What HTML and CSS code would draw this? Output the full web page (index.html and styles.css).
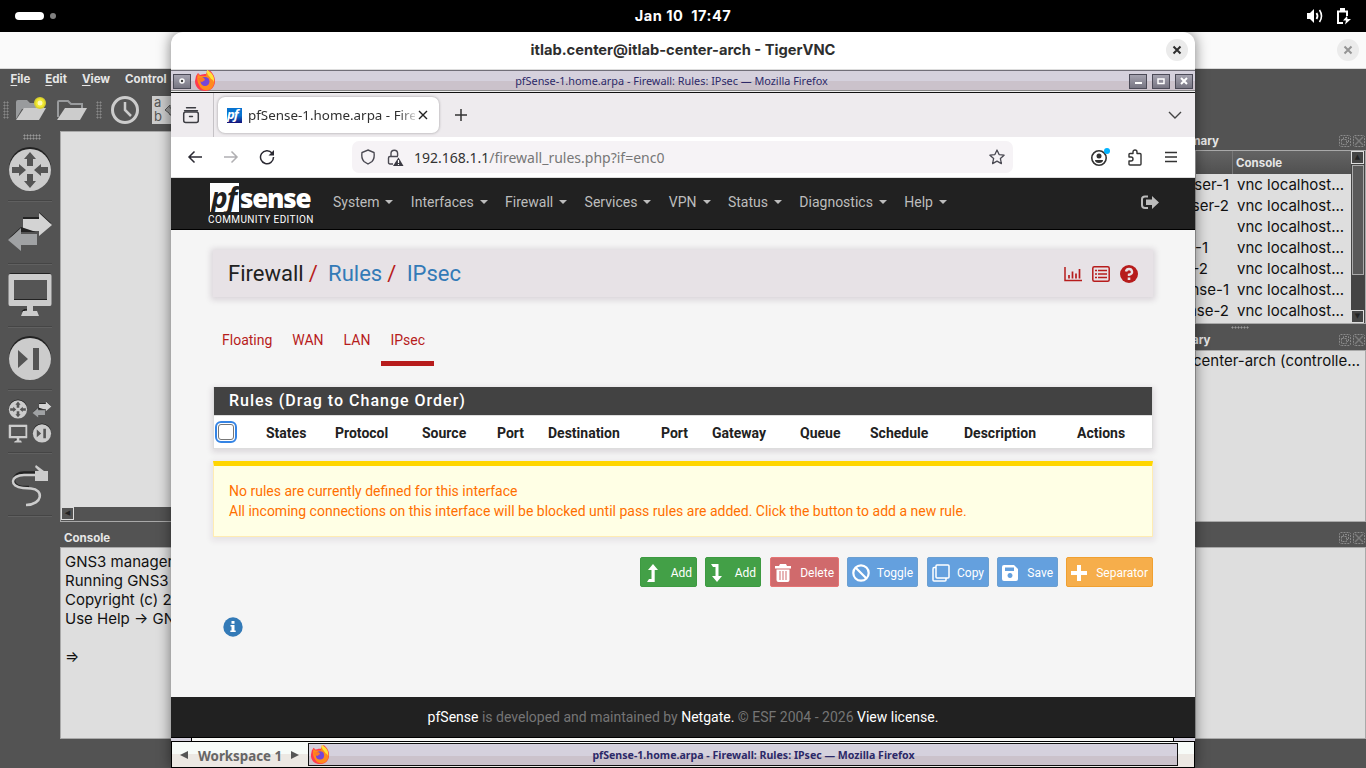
FILE: index.html
```
<!DOCTYPE html>
<html lang="en">
<head>
    <meta charset="UTF-8">
    <meta name="viewport" content="width=device-width, initial-scale=1.0">
    <title>pfSense-1.home.arpa - Firewall: Rules: IPsec</title>
    <link rel="stylesheet" href="styles.css">
</head>
<body>

    <!-- shared icons -->
    <svg class="defs" width="0" height="0">
        <symbol id="router" viewBox="0 0 44 46">
            <circle cx="22" cy="22" r="21" fill="#222"/>
            <circle cx="22" cy="24" r="21" fill="#ccc"/>
            <path fill="#555" d="M22 6l6 7h-3v7h-6v-7h-3zM22 42l6-7h-3v-7h-6v7h-3zM18 24l-7-6v3H4v6h7v3zM26 24l7-6v3h7v6h-7v3z"/>
        </symbol>
        <symbol id="switch" viewBox="0 0 44 40">
            <path fill="#222" d="M15 5h16V0l12 11-12 9v-3H15z"/>
            <path fill="#d3d3d3" d="M15 7h16V1l13 12-13 11v-5H15z"/>
            <path fill="#222" d="M13 15L1 26l11-6h16z"/>
            <path fill="#a0a2a4" d="M29 22H13v-6L0 28l13 11v-6h16z"/>
        </symbol>
        <symbol id="monitor" viewBox="0 0 44 44">
            <rect x="1" y="0" width="42" height="31" rx="2" fill="#222"/>
            <rect x="5" y="6" width="34" height="22" fill="#555"/>
            <path fill="#ccc" fill-rule="evenodd" d="M2 1h40q1.500 0 1.500 2v28q0 2-1.500 2H25v5h4l2 5H13l2-5h4v-5H2q-1.500 0-1.500-2V3q0-2 1.500-2zM6 7v20h33V7z"/>
            <path stroke="#222" d="M6 26.500h33M14 38.500l2-2h3"/>
        </symbol>
        <symbol id="skip" viewBox="0 0 44 46">
            <circle cx="22" cy="22" r="21" fill="#222"/>
            <circle cx="22" cy="24" r="21" fill="#ccc"/>
            <path fill="#555" d="M10 15l10 9-10 9zM25 13h6v22h-6z"/>
        </symbol>
        <symbol id="firefox" viewBox="0 0 22 22">
            <path fill="#ff3a4e" d="M2 6l2-3 2 2c3-1 4-1 6-1l3-4c3 2 6 6 6 11 0 6-4 10-10 10S1 17 1 11z"/>
            <path fill="#ff8a1e" d="M4 4l2 2h6l1-6 3 3c5 4 6 10 2 15-3 3-8 3-11 0-3-4-5-9-3-14z"/>
            <path fill="#ffe338" d="M13 0c4 2 8 6 7 12-1-2-2-3-3-3-1-3-5-4-4-9z"/>
            <circle cx="11" cy="11.500" r="4.500" fill="#7646d8"/>
            <path fill="#ff7a20" d="M4 8l6 0 1 2-3 2-3-1z"/>
        </symbol>
        <symbol id="float" viewBox="0 0 12 12">
            <path fill="none" stroke="#8b8b8b" stroke-dasharray="2 1" d="M1.500.5h9l1 1v9l-1 1h-9l-1-1v-9z"/>
            <path fill="none" stroke="#8b8b8b" stroke-dasharray="2 1" d="M2.500 4.500h5v5h-5zM4.500 4V2.500h5v5H8"/>
        </symbol>
        <symbol id="dockclose" viewBox="0 0 12 12">
            <path fill="none" stroke="#8b8b8b" stroke-dasharray="2 1" d="M1.500.5h9l1 1v9l-1 1h-9l-1-1v-9z"/>
            <path stroke="#7b7b7b" stroke-width="1.500" d="M2 2l8 8M10 2l-8 8"/>
        </symbol>
        <symbol id="cross" viewBox="0 0 10 10">
            <path stroke="currentColor" stroke-width="2" d="M1.500 1.500l7 7M8.500 1.500l-7 7"/>
        </symbol>
    </svg>

    <!-- desktop bar -->
    <div class="topbar">
        <div class="activities"><span class="pill"></span><span class="dot"></span></div>
        <div class="clock"><span>Jan 10</span><span>17:47</span></div>
        <div class="tray">
            <svg width="18" height="16" viewBox="0 0 18 16"><path fill="#fff" d="M1 5h3l4-4v14l-4-4H1z"/><path fill="none" stroke="#fff" stroke-width="1.800" d="M10.500 5q2 3 0 6"/><path fill="none" stroke="#fff" stroke-width="1.600" d="M13.500 2q4 6 0 12"/></svg>
            <svg width="15" height="17" viewBox="0 0 15 17"><path fill="none" stroke="#fff" stroke-width="2" d="M7 15H2V3.500h9V8"/><path fill="#fff" d="M4 0h5v3H4zM11 8l-4 4.500h3l-1 4 6-5.500h-3.500z"/></svg>
        </div>
    </div>

    <div class="desktop">

        <!-- GNS3 -->
        <div class="gns3">
            <div class="gns3-header"><span class="round-close"><svg width="10" height="10"><use href="#cross"/></svg></span></div>
            <div class="menubar"><span><u>F</u>ile</span><span><u>E</u>dit</span><span><u>V</u>iew</span><span>Control</span></div>
            <div class="gns3-body">
                <div class="gns3-left">
                    <div class="toolbar">
                        <i class="grip"></i>
                        <svg class="folder" width="32" height="26" viewBox="0 0 32 26"><path fill="#999b9d" d="M1 5q0-2 2-2h9l3 3h10v6H7L1 22z"/><path fill="#ccc" d="M1 23L9 11h22l-7 12z"/><circle cx="25" cy="6" r="6" fill="#d8cf30"/><circle cx="25" cy="6" r="4.500" fill="#f1e82e"/><circle cx="25" cy="6" r="2.500" fill="#fffbb0"/></svg>
                        <svg class="folder2" width="32" height="26" viewBox="0 0 32 26"><path fill="none" stroke="#999b9d" stroke-width="2" d="M2 20V5q0-1 1-1h9l3 3h11v5"/><path fill="#ccc" d="M1 23L9 11h22l-7 12z"/></svg>
                        <i class="grip"></i>
                        <svg class="watch" width="30" height="30" viewBox="0 0 30 30"><circle cx="15" cy="15" r="12.500" fill="#555" stroke="#ccc" stroke-width="3"/><path fill="none" stroke="#ccc" stroke-width="2.500" d="M15 7v8l6 6"/></svg>
                        <div class="ab"><span>a</span><span>b</span><svg width="13" height="14" viewBox="0 0 13 14"><path fill="#999" stroke="#555" d="M1 7l5-5v3h7v7H6l-1-2z"/></svg></div>
                    </div>
                    <div class="work">
                        <div class="devices">
                            <i class="grip-h"></i>
                            <div class="device"><svg width="44" height="46"><use href="#router"/></svg></div>
                            <div class="device"><svg width="44" height="40"><use href="#switch"/></svg></div>
                            <div class="device"><svg width="44" height="44"><use href="#monitor"/></svg></div>
                            <div class="device"><svg width="44" height="46"><use href="#skip"/></svg></div>
                            <div class="device all">
                                <svg width="20" height="20"><use href="#router"/></svg>
                                <svg width="20" height="17"><use href="#switch"/></svg>
                                <svg width="20" height="19"><use href="#monitor"/></svg>
                                <svg width="20" height="20"><use href="#skip"/></svg>
                            </div>
                            <div class="device"><svg width="40" height="46" viewBox="0 0 40 46"><path fill="none" stroke="#222" stroke-width="2.500" d="M25 11.500H14C2 11.500 0 24 12 26h7"/><path fill="none" stroke="#ccc" stroke-width="2.500" d="M26 14H14C0 14-1 26 13 27l8 .500c13 1 12 16-5 16.500"/><path fill="#ccc" d="M25 10h4l-4-4 1-2 8 6h4v10H25z"/></svg></div>
                        </div>
                        <div class="center">
                            <div class="canvas"><div class="hscroll"><b>◀</b></div></div>
                            <div class="dock-title">Console</div>
                            <div class="console">GNS3 manager<br>Running GNS3 <br>Copyright (c) 2<br>Use Help → GN<br><br>⇒</div>
                        </div>
                    </div>
                </div>
                <div class="gns3-right">
                    <div class="dock-title topo"><span>mary</span><svg width="12" height="12"><use href="#float"/></svg><svg width="12" height="12"><use href="#dockclose"/></svg></div>
                    <div class="topology">
                        <div class="nodes">
                            <div class="nodes-head"><span></span><span>Console</span></div>
                            <div class="node"><span>ser-1</span><span>vnc localhost...</span></div>
                            <div class="node"><span>ser-2</span><span>vnc localhost...</span></div>
                            <div class="node"><span></span><span>vnc localhost...</span></div>
                            <div class="node short"><span>-1</span><span>vnc localhost...</span></div>
                            <div class="node short"><span>-2</span><span>vnc localhost...</span></div>
                            <div class="node"><span>nse-1</span><span>vnc localhost...</span></div>
                            <div class="node"><span>nse-2</span><span>vnc localhost...</span></div>
                        </div>
                        <div class="vscroll"><b>▲</b><i></i><b>▼</b></div>
                    </div>
                    <div class="dock-title servers"><i class="grip-h"></i><span>ary</span><svg width="12" height="12"><use href="#float"/></svg><svg width="12" height="12"><use href="#dockclose"/></svg></div>
                    <div class="server-list">center-arch (controlle...</div>
                    <div class="dock-title"><span></span><svg width="12" height="12"><use href="#float"/></svg><svg width="12" height="12"><use href="#dockclose"/></svg></div>
                    <div class="console-right"></div>
                </div>
            </div>
        </div>

        <!-- TigerVNC -->
        <div class="vnc">
            <div class="vnc-header">itlab.center@itlab-center-arch - TigerVNC<span class="round-close"><svg width="10" height="10"><use href="#cross"/></svg></span></div>

            <div class="wm-title">
                <span class="wm-btn"><svg width="6" height="6" viewBox="0 0 6 6"><circle cx="3" cy="3" r="2" fill="#444" stroke="#fff" stroke-width="1.500"/></svg></span>
                <svg class="ff" width="22" height="22"><use href="#firefox"/></svg>
                <span class="wm-text">pfSense-1.home.arpa - Firewall: Rules: IPsec — Mozilla Firefox</span>
                <span class="wm-btn"><svg width="8" height="8" viewBox="0 0 8 8"><path fill="#fff" d="M1 5h7v2H1z"/></svg></span>
                <span class="wm-btn"><svg width="8" height="8" viewBox="0 0 8 8"><path fill="none" stroke="#fff" stroke-width="1.500" d="M1 2h6v4.500H1z"/></svg></span>
                <span class="wm-btn"><svg width="8" height="8" viewBox="0 0 8 8"><path stroke="#fff" stroke-width="2" d="M1 1l6 6M7 1L1 7"/></svg></span>
            </div>

            <div class="tabstrip">
                <div class="fxview"><svg width="18" height="18" viewBox="0 0 18 18"><path fill="none" stroke="#3c3c42" stroke-width="1.400" stroke-linecap="round" d="M4.500 1.700h9M2.500 4.700h13M7.500 10.500h3"/><rect x="1.700" y="6" width="14.600" height="10.500" rx="2" fill="none" stroke="#3c3c42" stroke-width="1.500"/></svg></div>
                <div class="tab">
                    <span class="favicon">pf</span>
                    <span class="tab-text">pfSense-1.home.arpa - Fire</span>
                    <svg width="10" height="10" viewBox="0 0 10 10"><path stroke="#222" stroke-width="1.400" d="M1 1l8 8M9 1L1 9"/></svg>
                </div>
                <svg class="newtab" width="14" height="14" viewBox="0 0 14 14"><path stroke="#333" stroke-width="1.500" d="M7 1v12M1 7h12"/></svg>
                <svg class="alltabs" width="14" height="8" viewBox="0 0 14 8"><path fill="none" stroke="#444" stroke-width="1.400" d="M1 1l6 6 6-6"/></svg>
            </div>

            <div class="navtools">
                <svg width="16" height="14" viewBox="0 0 16 14"><path fill="none" stroke="#2b2a33" stroke-width="1.500" d="M15 7H2M7.500 1.500L2 7l5.500 5.500"/></svg>
                <svg width="16" height="14" viewBox="0 0 16 14"><path fill="none" stroke="#b0afb2" stroke-width="1.500" d="M1 7h13M8.500 1.500L14 7l-5.500 5.500"/></svg>
                <svg class="reload" width="16" height="16" viewBox="0 0 16 16"><path fill="none" stroke="#2b2a33" stroke-width="1.500" d="M13 4A6.500 6.500 0 1 0 14.500 8"/><path fill="#2b2a33" d="M15 1v5.500H9.500z"/></svg>
                <div class="urlbar">
                    <svg width="16" height="16" viewBox="0 0 16 16"><path fill="none" stroke="#4b4a53" stroke-width="1.400" d="M8 1l6 2.500q1 6-2 9L8 15l-4-2.500q-3-3-2-9z"/></svg>
                    <svg class="lock" width="17" height="17" viewBox="0 0 17 17"><path fill="none" stroke="#4b4a53" stroke-width="1.400" d="M4 7V4.500a3.300 3.300 0 0 1 6.600 0V7M6 15H3q-1.500 0-1.500-1.500V9Q1.500 7.500 3 7.500h8"/><path fill="#3b3a43" d="M11.500 8.500L16.500 17H6z"/><path stroke="#fff" stroke-width="1.200" d="M11.500 11v3M11.500 15v1"/></svg>
                    <span class="url"><b>192.168.1.1</b>/firewall_rules.php?if=enc0</span>
                    <svg width="16" height="16" viewBox="0 0 16 16"><path fill="none" stroke="#4b4a53" stroke-width="1.300" stroke-linejoin="round" d="M8 1l2.100 4.600 5 .6-3.700 3.400 1 5L8 12.100l-4.400 2.500 1-5L.9 6.200l5-.6z"/></svg>
                </div>
                <svg class="account" width="20" height="20" viewBox="0 0 20 20"><circle cx="9" cy="11" r="7.200" fill="none" stroke="#333" stroke-width="1.600"/><circle cx="9" cy="9" r="2.500" fill="#333"/><path fill="#333" d="M5 13h8q0 3-4 3t-4-3z"/><circle cx="17" cy="4" r="3" fill="#00b3ff"/></svg>
                <svg class="puzzle" width="16" height="17" viewBox="0 0 16 17"><path fill="none" stroke="#333" stroke-width="1.400" stroke-linejoin="round" d="M2 8V5.500q0-1 1-1h3V3a2 2 0 0 1 4 0v1.500h3q1 0 1 1V15q0 1-1 1H3q-1 0-1-1v-3h2a2 2 0 0 0 0-4z"/></svg>
                <svg class="burger" width="12" height="12" viewBox="0 0 12 12"><path stroke="#333" stroke-width="1.300" d="M0 1.500h12M0 6h12M0 10.500h12"/></svg>
            </div>

            <div class="page">
                <div class="navbar">
                    <div class="brand">
                        <div class="logo"><span class="pf">pf</span><span class="sense">sense</span></div>
                        <div class="edition">COMMUNITY EDITION</div>
                    </div>
                    <a>System</a><a>Interfaces</a><a>Firewall</a><a>Services</a><a>VPN</a><a>Status</a><a>Diagnostics</a><a>Help</a>
                    <svg class="logout" width="18" height="15" viewBox="0 0 18 15"><path fill="none" stroke="#bbb" stroke-width="2" d="M7 1.500H4Q1 1.500 1 4v6q0 3 3 3h3"/><path fill="#bbb" d="M5 4.500h6V1l7 6.500-7 6.500v-4H5z"/></svg>
                </div>

                <div class="container">
                    <div class="header">
                        <span>Firewall</span><i>/</i><a>Rules</a><i>/</i><a>IPsec</a>
                        <div class="header-icons">
                            <svg width="18" height="16" viewBox="0 0 18 16"><path fill="none" stroke="#b71c1c" stroke-width="1.500" d="M1 1v13.500h17"/><path stroke="#b71c1c" stroke-width="1.700" d="M5 12.500V9M8.500 12.500v-7M12 12.500V7.500M15.500 12.500V3"/></svg>
                            <svg width="18" height="16" viewBox="0 0 18 16"><rect x=".8" y=".8" width="16.400" height="14.400" rx="1.500" fill="none" stroke="#b71c1c" stroke-width="1.500"/><path stroke="#b71c1c" stroke-width="1.500" d="M3 4.500h2M3 8h2M3 11.500h2M6 4.500h9M6 8h9M6 11.500h9"/></svg>
                            <svg width="18" height="18" viewBox="0 0 18 18"><circle cx="9" cy="9" r="9" fill="#b71c1c"/><path fill="none" stroke="#e7e2e6" stroke-width="2.400" d="M6 6.500Q6.500 4 9 4t3 2.500T9 9.700v1.300"/><path fill="#e7e2e6" d="M7.700 12.500h2.600V15H7.700z"/></svg>
                        </div>
                    </div>

                    <div class="pills"><a>Floating</a><a>WAN</a><a>LAN</a><a class="active">IPsec</a></div>

                    <div class="panel">
                        <div class="panel-heading">Rules (Drag to Change Order)</div>
                        <div class="thead">
                            <span class="checkbox"></span><span>States</span><span>Protocol</span><span>Source</span><span>Port</span><span>Destination</span><span>Port</span><span>Gateway</span><span>Queue</span><span>Schedule</span><span>Description</span><span>Actions</span>
                        </div>
                    </div>

                    <div class="alert">No rules are currently defined for this interface<br>All incoming connections on this interface will be blocked until pass rules are added. Click the button to add a new rule.</div>

                    <div class="actions">
                        <a class="btn green w57"><svg width="16" height="20" viewBox="0 0 16 20"><path fill="#fff" d="M8 1l5 6H9.700v12H2l2-3h2.500V7H3z"/></svg>Add</a>
                        <a class="btn green w56"><svg width="16" height="20" viewBox="0 0 16 20"><path fill="#fff" d="M1 1h7.500v12H12l-5 6-5-6h3.500V4H3z"/></svg>Add</a>
                        <a class="btn red w69"><svg width="16" height="20" viewBox="0 0 16 20"><path fill="#fff" fill-rule="evenodd" d="M0 3h4l1-2h6l1 2h4v2.500H0zM1.500 6.500h13V17q0 2-2 2h-9q-2 0-2-2zM4.500 8v9h1V8zM7.500 8v9h1V8zM10.500 8v9h1V8z"/></svg>Delete</a>
                        <a class="btn blue w71"><svg width="18" height="20" viewBox="0 0 18 20"><circle cx="9" cy="10" r="7.700" fill="none" stroke="#fff" stroke-width="2.200"/><path stroke="#fff" stroke-width="2.200" d="M3.500 4.500l11 11"/></svg>Toggle</a>
                        <a class="btn blue w62"><svg width="18" height="20" viewBox="0 0 18 20"><rect x="4" y="2" width="13" height="13" rx="1" fill="none" stroke="#fff" stroke-width="1.500"/><path fill="none" stroke="#fff" stroke-width="1.500" d="M4 4.500H2Q1 4.500 1 6v11q0 1 1 1h11q1 0 1-1v-2"/></svg>Copy</a>
                        <a class="btn blue w61"><svg width="16" height="20" viewBox="0 0 16 20"><path fill="#fff" fill-rule="evenodd" d="M0 4q0-2 2-2h10l4 4v10q0 2-2 2H2q-2 0-2-2zM3 4.500V8h9V4.500zM8 10a2.500 2.500 0 1 0 .01 0z"/></svg>Save</a>
                        <a class="btn orange w87"><svg width="16" height="20" viewBox="0 0 16 20"><path stroke="#fff" stroke-width="4" d="M8 2v16M0 10h16"/></svg>Separator</a>
                    </div>

                    <svg class="info" width="20" height="20" viewBox="0 0 20 20"><circle cx="10" cy="10" r="9.700" fill="#337ab7"/><path fill="#fff" d="M8.500 4h3v2.800h-3zM7.500 8h4v5.500h1.200V15H7.300v-1.500h1.200v-4h-1z"/></svg>
                </div>

                <div class="footer"><b>pfSense</b> is developed and maintained by <b>Netgate.</b> © ESF 2004 - 2026 <b>View license.</b></div>
            </div>

            <div class="wm-bottom"><i></i><i></i><i></i></div>
            <div class="taskbar">
                <span class="arrow left"></span>
                <span class="workspace">Workspace 1</span>
                <span class="arrow right"></span>
                <div class="task"><svg width="20" height="20"><use href="#firefox"/></svg><span>pfSense-1.home.arpa - Firewall: Rules: IPsec — Mozilla Firefox</span></div>
            </div>
        </div>
    </div>

</body>
</html>
```
FILE: styles.css
```
* {
    box-sizing: border-box;
}

body {
    margin: 0;
    width: 1366px;
    height: 768px;
    overflow: hidden;
    background: #000;
    font-family: Inter, "Noto Sans", sans-serif;
}

svg {
    display: block;
    flex: none;
}

.defs {
    position: absolute;
}

/* desktop bar */
.topbar {
    display: flex;
    justify-content: space-between;
    align-items: center;
    height: 32px;
    padding: 0 15px;
    color: #fff;
}

.activities, .tray {
    display: flex;
    align-items: center;
    width: 200px;
    gap: 6px;
}

.tray {
    justify-content: flex-end;
    gap: 12px;
}

.pill {
    width: 29px;
    height: 8px;
    border-radius: 4px;
    background: #fff;
}

.dot {
    width: 6px;
    height: 6px;
    border-radius: 50%;
    background: #808080;
}

.clock {
    display: flex;
    gap: 8px;
    margin-top: -1px;
    font-size: 14.6px;
    font-weight: 700;
    letter-spacing: 0.5px;
}

.desktop {
    position: relative;
    height: 736px;
    overflow: hidden;
}

/* GNS3 window */
.gns3 {
    height: 736px;
    background: #535353;
    color: #e6e6e6;
}

.gns3-header {
    display: flex;
    justify-content: flex-end;
    align-items: center;
    height: 37px;
    padding-right: 7px;
    background: #fafafa;
    border-bottom: 1px solid #d8d8d8;
    color: #949494;
}

.round-close {
    display: flex;
    align-items: center;
    justify-content: center;
    width: 22px;
    height: 22px;
    border-radius: 50%;
    background: #ebebeb;
}

.menubar {
    display: flex;
    gap: 15px;
    height: 21px;
    padding-left: 10.500px;
    font-size: 11.5px;
    font-weight: 700;
    line-height: 20px;
}

.menubar u {
    text-underline-offset: 2px;
}

.gns3-body {
    display: flex;
    height: 678px;
}

.gns3-left {
    flex: 1;
}

.toolbar {
    display: flex;
    align-items: center;
    height: 41px;
    padding: 0 0 2px 3px;
}

.grip {
    width: 6px;
    height: 18px;
    background: radial-gradient(#888 45%, transparent 50%) 0 0 / 3px 3px;
}

.grip-h {
    width: 18px;
    height: 6px;
    background: radial-gradient(#999 45%, transparent 50%) 0 0 / 3px 3px;
}

.folder {
    margin-left: 6px;
}

.folder2 {
    margin: 0 8px 0 9px;
}

.watch {
    margin: 0 12px 0 8px;
}

.ab {
    display: grid;
    grid-template-columns: 10px 13px;
    width: 32px;
    height: 28px;
    padding-left: 2px;
    background: #ccc;
    color: #555;
    font-size: 13px;
    line-height: 13px;
}

.ab svg {
    grid-area: 1 / 2 / 3;
    align-self: center;
}

.work {
    display: flex;
}

.devices {
    width: 60px;
    height: 637px;
    padding-top: 3px;
}

.devices .grip-h {
    display: block;
    margin: 0 0 -2px 23px;
}

.device {
    display: flex;
    align-items: center;
    justify-content: center;
    width: 44px;
    height: 63px;
    margin-left: 8px;
    border-bottom: 1px solid #454545;
    box-shadow: 0 1px #606060;
}

.devices .all {
    flex-wrap: wrap;
    align-content: center;
    gap: 4px;
}

.center {
    flex: 1;
}

.canvas {
    display: flex;
    align-items: flex-end;
    height: 391px;
    background: #dedede;
    border: 1px solid #a9a9a9;
}

.hscroll {
    width: 100%;
    height: 14px;
    background: #535353;
}

.hscroll b, .vscroll b {
    display: block;
    width: 13px;
    height: 13px;
    border: 1px solid #ddd;
    font: 7px/10px "DejaVu Sans", sans-serif;
    text-align: center;
    color: #222;
}

.dock-title {
    display: flex;
    align-items: center;
    height: 25px;
    padding: 7px 1px 0 4px;
    gap: 2px;
    font-size: 11.5px;
    font-weight: 700;
}

.dock-title span {
    flex: 1;
}

.console {
    height: 192px;
    padding: 4px;
    background: #dedede;
    border: 1px solid #a9a9a9;
    color: #111;
    font-size: 15px;
    line-height: 19px;
    white-space: pre;
}

.gns3-right {
    width: 171px;
}

.gns3-right .dock-title {
    padding-left: 0;
}

.gns3-right .topo {
    height: 60px;
    padding-top: 42px;
}

.topo span {
    margin-left: -5px;
}

.topology {
    display: flex;
    height: 174px;
    border: 1px solid #a9a9a9;
    background: #dedede;
}

.nodes {
    flex: 1;
}

.nodes-head {
    display: flex;
    height: 23px;
    background: linear-gradient(#646464, #505050);
    font-size: 11.5px;
    font-weight: 700;
    line-height: 24px;
}

.nodes-head span:first-child {
    width: 37px;
    border-right: 1px solid #777;
    margin-right: 3px;
}

.node {
    display: flex;
    height: 21px;
    color: #111;
    font-size: 15px;
    line-height: 22px;
}

.node span:first-child {
    display: flex;
    justify-content: flex-end;
    width: 33px;
    margin-right: 8px;
    white-space: nowrap;
}

.node.short span:first-child {
    width: 12px;
    margin-right: 29px;
}

.node span:last-child {
    white-space: nowrap;
}

.vscroll {
    display: flex;
    flex-direction: column;
    width: 14px;
    background: #444;
}

.vscroll i {
    height: 110px;
    margin: 1px;
    background: #595959;
    border: 1px solid #aaa;
}

.vscroll i + b {
    margin-top: auto;
}

.gns3-right .servers {
    position: relative;
    height: 26px;
    padding-top: 6px;
}

.servers span {
    margin: -1px 0 0 -3px;
}

.servers .grip-h {
    position: absolute;
    left: 36px;
    top: 2px;
    height: 3px;
}

.server-list {
    height: 172px;
    background: #dedede;
    border: 1px solid #a9a9a9;
    color: #111;
    font-size: 15px;
    line-height: 20px;
    text-indent: -3px;
    white-space: nowrap;
}

.console-right {
    height: 192px;
    background: #dedede;
    border: 1px solid #a9a9a9;
}

/* VNC window */
.vnc {
    position: absolute;
    left: 171px;
    top: 0;
    width: 1024px;
    height: 736px;
    border-radius: 12px 12px 0 0;
    background: #fff;
    box-shadow: 0 0 14px rgba(0, 0, 0, 0.5);
    overflow: hidden;
    font-family: "Noto Sans", sans-serif;
}

.vnc-header {
    position: relative;
    height: 38px;
    border-bottom: 1px solid #ddd;
    color: #2e2e2e;
    font: 700 14.7px/36px Inter, sans-serif;
    text-align: center;
}

.vnc-header .round-close {
    position: absolute;
    right: 7px;
    top: 7px;
}

.wm-title {
    display: flex;
    align-items: center;
    height: 23px;
    padding: 0 2px 1px;
    gap: 5px;
    background: linear-gradient(#d5d1dd 50%, #cbc2cb 50%);
    border-top: 1px solid #716f79;
    border-bottom: 1px solid #111;
    box-shadow: inset 0 -1px #eee, inset 0 -2px #888;
}

.wm-btn {
    display: flex;
    align-items: center;
    justify-content: center;
    width: 18px;
    height: 15px;
    background: linear-gradient(#a5a3b0, #777582);
    border: 1px solid #4b4a57;
}

.wm-title .ff {
    margin-left: -2px;
}

.wm-text {
    flex: 1;
    margin-top: -1px;
    padding-right: 2px;
    text-align: center;
    color: #2c2968;
    font-size: 10.86px;
}

.tabstrip {
    display: flex;
    align-items: center;
    height: 44px;
    background: #eeebee;
    padding-right: 13px;
}

.fxview {
    width: 43px;
    height: 44px;
    padding: 13px 0 0 11px;
    border-right: 1px solid #c5c2c6;
}

.tab {
    display: flex;
    align-items: center;
    width: 221px;
    height: 36px;
    margin-left: 4px;
    padding-left: 9px;
    border-radius: 7px;
    background: #fff;
    box-shadow: 0 0 3px rgba(0, 0, 0, 0.35);
}

.favicon {
    width: 15px;
    height: 15px;
    margin-right: 6px;
    background: linear-gradient(#0873d0 50%, #141078);
    color: #fff;
    font: italic 700 13px/13px "Noto Sans", sans-serif;
    letter-spacing: -1px;
}

.tab-text {
    width: 167px;
    margin-right: 3px;
    font-size: 13.4px;
    white-space: nowrap;
    overflow: hidden;
    color: #303030;
    -webkit-mask-image: linear-gradient(to right, #000 90%, rgba(0, 0, 0, 0.2));
}

.newtab {
    margin-left: 15px;
}

.alltabs {
    margin-left: auto;
}

.navtools {
    display: flex;
    align-items: center;
    height: 41px;
    padding-left: 16px;
    border-bottom: 1px solid #ddd;
}

.navtools > svg + svg {
    margin-left: 20px;
}

.navtools > svg.puzzle {
    margin-left: 17px;
}

.navtools > svg.burger {
    margin-left: 22px;
}

.urlbar {
    display: flex;
    align-items: center;
    width: 661px;
    height: 32px;
    margin-left: 77px;
    padding: 0 8px;
    border-radius: 7px;
    background: #f6f3f6;
}

.lock {
    margin: 0 10px 0 11px;
}

.url {
    flex: 1;
    color: #777;
    font-size: 14px;
}

.url b {
    color: #333;
    font-weight: 400;
}

.account {
    margin-left: 77px;
}

/* pfSense page */
.page {
    display: flex;
    flex-direction: column;
    height: 559px;
    background: #f5f5f5;
    font-family: Roboto, sans-serif;
    font-size: 14px;
    line-height: 20px;
}

.navbar {
    display: flex;
    align-items: center;
    height: 52px;
    padding: 0 36px 3px 37px;
    background: #212121;
    border-bottom: 1px solid #000;
    color: #bdbdbd;
}

.navbar a {
    display: flex;
    align-items: center;
    margin-right: 17.4px;
}

.navbar a::after {
    content: "";
    margin-left: 6px;
    border: 4px solid transparent;
    border-top-color: #bdbdbd;
    border-bottom: 0;
}

.brand {
    width: 125px;
    color: #fff;
}

.logo {
    display: flex;
    height: 30px;
    margin: 5px 0 0 2px;
    font-family: "Open Sans", sans-serif;
    font-weight: 700;
}

.pf {
    width: 29px;
    height: 29px;
    padding-left: 1px;
    background: #fff;
    color: #212121;
    font-size: 28px;
    font-style: italic;
    line-height: 28px;
    letter-spacing: -1px;
}

.sense {
    margin-left: 1px;
    font-size: 26px;
    font-weight: 800;
    line-height: 30px;
    letter-spacing: -1.2px;
}

.edition {
    font-size: 10px;
    line-height: 13px;
    letter-spacing: 0.4px;
    white-space: nowrap;
}

.logout {
    margin-left: auto;
}

.container {
    flex: 1;
    padding: 20px 42px 0;
}

.header {
    display: flex;
    align-items: center;
    height: 47px;
    padding: 0 15px;
    background: #e7e2e6;
    box-shadow: 0 1px 6px 2px rgba(60, 30, 60, 0.15);
    color: #212121;
    font-size: 22px;
}

.header a {
    color: #337ab7;
}

.header i {
    margin: 0 10.4px 0 5px;
    color: #b71c1c;
    font-style: normal;
}

.header-icons {
    display: flex;
    align-items: center;
    gap: 10px;
    margin-left: auto;
}

.pills {
    display: flex;
    gap: 2px;
    margin-top: 23px;
    color: #b71c1c;
}

.pills a {
    height: 46px;
    padding: 10px 9px;
}

.pills .active {
    border-bottom: 5px solid #b71c1c;
}

.panel {
    margin-top: 21px;
    border: 1px solid #ddd;
    border-top: 0;
    box-shadow: 0 2px 6px 1px rgba(60, 30, 60, 0.14);
}

.panel-heading {
    height: 28px;
    padding-left: 15px;
    background: #424242;
    color: #fff;
    font-size: 16px;
    font-weight: 500;
    line-height: 27px;
    letter-spacing: 1px;
}

.thead {
    display: grid;
    grid-template-columns: 52px 69px 87px 75px 51px 113px 51px 88px 70px 94px 113px 1fr;
    align-items: center;
    height: 33px;
    padding-top: 1px;
    background: #fff;
    border-top: 1px solid #ddd;
    color: #212121;
    font-weight: 700;
}

.checkbox {
    width: 16px;
    height: 16px;
    margin: -2px 0 0 4px;
    border: 1px solid #777;
    border-radius: 3px;
    outline: 2px solid #3584e4;
    outline-offset: 1px;
}

.alert {
    height: 76px;
    margin-top: 12px;
    padding: 15px;
    background: #ffffe5;
    border: 1px solid #ffecb3;
    border-top: 5px solid #ffd600;
    box-shadow: 0 2px 6px 2px rgba(60, 30, 60, 0.08);
    color: #ff6f00;
}

.actions {
    display: flex;
    justify-content: flex-end;
    gap: 8px;
    margin-top: 20px;
}

.btn {
    display: flex;
    align-items: center;
    justify-content: space-between;
    height: 30px;
    padding: 2px 4px 0;
    border: 1px solid;
    border-radius: 2px;
    color: #fff;
    font-size: 12px;
}

.w56 { width: 56px; }
.w57 { width: 57px; }
.w61 { width: 61px; }
.w62 { width: 62px; margin-left: 1px; }
.w69 { width: 69px; margin-left: 1px; }
.w71 { width: 71px; }
.w87 { width: 87px; }

.green {
    background: #43a047;
    border-color: #3d9a41;
}

.red {
    background: #d06a6c;
    border-color: #e57373;
}

.blue {
    background: #64a0de;
    border-color: #6b9fd0;
}

.orange {
    background: #f6ae4b;
    border-color: #f0a030;
}

.info {
    margin: 30px 0 0 10px;
}

.footer {
    height: 40px;
    background: #212121;
    color: #757575;
    line-height: 40px;
    text-align: center;
}

.footer b {
    color: #fff;
    font-weight: 400;
}

.wm-bottom {
    display: flex;
    height: 5px;
    background: #fff;
    border: solid #000;
    border-width: 1px 0;
}

.wm-bottom i {
    width: 21px;
    background: #d5d1dd;
    border-right: 1px solid #000;
}

.wm-bottom i:nth-child(2) {
    flex: 1;
    background: #f8f8f6;
}

.wm-bottom i:last-child {
    border-right: 0;
}

.taskbar {
    display: flex;
    align-items: center;
    height: 26px;
    padding-left: 8px;
    background: linear-gradient(#f7fbf8 50%, #ece8e3 50%);
    border: 1px solid #000;
    border-top: 0;
}

.workspace {
    margin: 2px 9px 0 10px;
    color: #666;
    font-size: 13.3px;
    font-weight: 700;
    white-space: nowrap;
}

.arrow {
    border: 4px solid transparent;
}

.left {
    border-right: 8px solid #555;
    border-left: 0;
}

.right {
    border-left: 8px solid #555;
    border-right: 0;
}

.task {
    display: flex;
    align-items: center;
    width: 870px;
    height: 23px;
    margin-left: 9px;
    padding-left: 1px;
    background: linear-gradient(#d5d1dd 55%, #cbc2cb 55%);
    border: 1px solid #111;
    color: #2c2968;
    font-size: 10.6px;
    font-weight: 700;
}

.task span {
    flex: 1;
    text-align: center;
}
```
